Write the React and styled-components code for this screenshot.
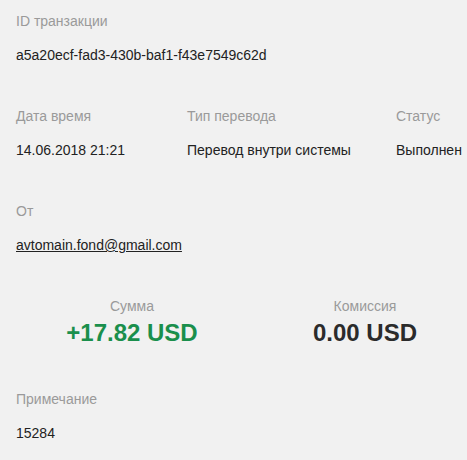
import React from "react";
import styled, { createGlobalStyle } from "styled-components";

const GlobalStyle = createGlobalStyle`
  html, body {
    margin: 0;
    padding: 0;
    background: #f1f1f1;
  }
  body {
    font-family: "Liberation Sans", Arial, sans-serif;
    color: #222;
  }
`;

const Details = () => {
  return (
    <Wrapper>
      <Field>
        <Label>ID транзакции</Label>
        <Value>a5a20ecf-fad3-430b-baf1-f43e7549c62d</Value>
      </Field>

      <Columns>
        <Field>
          <Label>Дата время</Label>
          <Value>14.06.2018 21:21</Value>
        </Field>
        <Field>
          <Label>Тип перевода</Label>
          <Value>Перевод внутри системы</Value>
        </Field>
        <Field>
          <Label>Статус</Label>
          <Value>Выполнен</Value>
        </Field>
      </Columns>

      <Field>
        <Label>От</Label>
        <Value>
          <Mail href="#">avtomain.fond@gmail.com</Mail>
        </Value>
      </Field>

      <Totals>
        <Total>
          <Label>Сумма</Label>
          <Amount positive>+17.82 USD</Amount>
        </Total>
        <Total>
          <Label>Комиссия</Label>
          <Amount>0.00 USD</Amount>
        </Total>
      </Totals>

      <Field>
        <Label>Примечание</Label>
        <Value>15284</Value>
      </Field>
    </Wrapper>
  );
};

const Wrapper = styled.section`
  width: 467px;
  height: 460px;
  box-sizing: border-box;
  padding: 13px 16px 0;
  display: flex;
  flex-direction: column;
  gap: 45px;
  overflow: hidden;
`;

const Field = styled.div`
  display: flex;
  flex-direction: column;
  gap: 18px;
`;

const Label = styled.div`
  font-size: 14px;
  line-height: 16px;
  color: #9a9a9a;
`;

const Value = styled.div`
  font-size: 14px;
  line-height: 16px;
  color: #222;
`;

const Mail = styled.a`
  color: #222;
  text-decoration: underline;
`;

const Columns = styled.div`
  display: grid;
  grid-template-columns: 171px 209px 1fr;
`;

const Totals = styled.div`
  display: grid;
  grid-template-columns: 232px 234px;
  margin-bottom: -1px;
`;

const Total = styled.div`
  display: flex;
  flex-direction: column;
  align-items: center;
  gap: 5px;
`;

const Amount = styled.div`
  font-size: 24px;
  font-weight: bold;
  line-height: 28px;
  color: ${({ positive }) => (positive ? "#1a8f4c" : "#2b2b2b")};
`;

export default function App() {
  return (
    <>
      <GlobalStyle />
      <Details />
    </>
  );
}
